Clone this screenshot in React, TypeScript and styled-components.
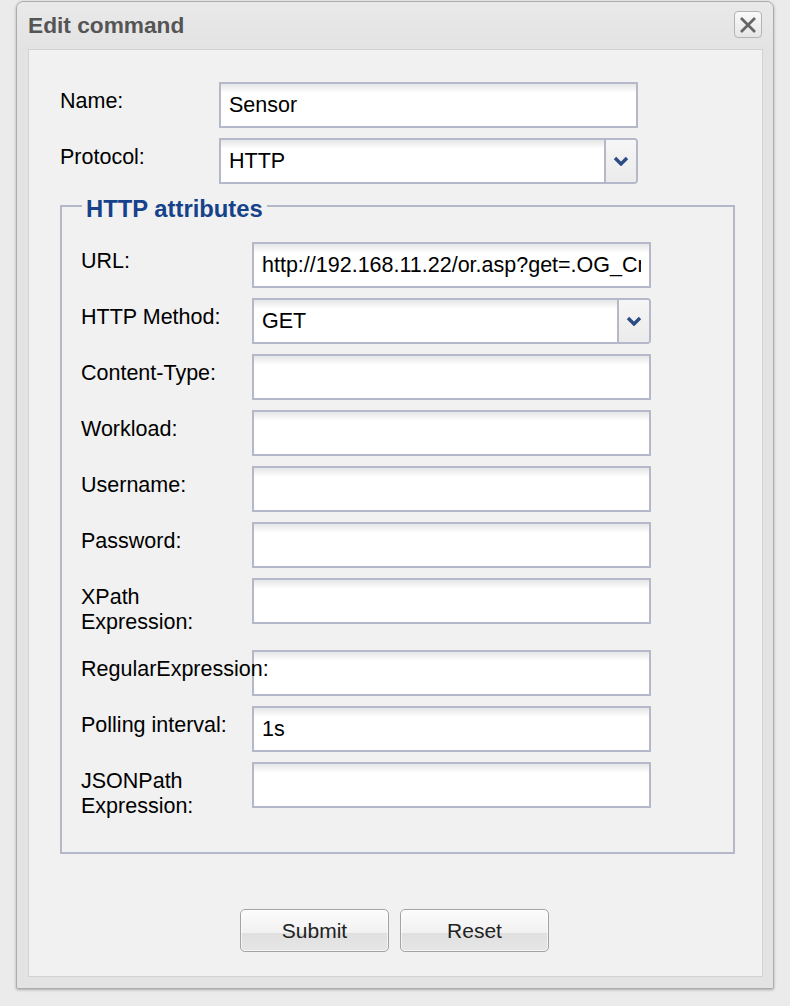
import React from "react";
import styled, { createGlobalStyle } from "styled-components";

const GlobalStyle = createGlobalStyle`
  html, body {
    margin: 0;
    padding: 0;
    background: #ebebeb;
  }
  body {
    font-family: "Liberation Sans", Arial, sans-serif;
  }
  * { box-sizing: border-box; }
`;

const Page = styled.div`
  width: 790px;
  height: 1006px;
  padding-top: 1px;
  background: #ebebeb;
  overflow: hidden;
`;

const Dialog = styled.div`
  margin-left: 16px;
  width: 758px;
  background: linear-gradient(to bottom, #e9e9e9 0px, #e3e3e3 48px, #e3e3e3 100%);
  border: 1px solid #acacac;
  border-radius: 7px 7px 2px 2px;
  box-shadow: 0 1px 3px rgba(0, 0, 0, 0.28);
  padding: 0 10px 11px 11px;
`;

const Header = styled.div`
  height: 47px;
  display: flex;
  justify-content: space-between;
  align-items: flex-start;
  padding-top: 8px;
`;

const Title = styled.div`
  margin-top: 2px;
  font-family: "Liberation Sans", Arial, sans-serif;
  font-weight: bold;
  font-size: 22.7px;
  line-height: 26px;
  color: #555555;
`;

const CloseButton = styled.div`
  width: 28px;
  height: 27px;
  margin-top: 1px;
  margin-right: 1px;
  border: 1px solid #b3b3b3;
  border-radius: 4px;
  background: linear-gradient(to bottom, #fafafa, #e6e6e6);
  display: flex;
  align-items: center;
  justify-content: center;
`;

const Panel = styled.div`
  background: #f1f1f1;
  border: 1px solid #d2d2d2;
  padding: 32px 27px 24px 31px;
`;

const TopGrid = styled.div`
  display: grid;
  grid-template-columns: 159px 419px;
  row-gap: 10px;
`;

const FieldGrid = styled.div`
  display: grid;
  grid-template-columns: 171px 399px;
  row-gap: 10px;
`;

const Label = styled.div`
  position: relative;
  z-index: 1;
  padding: 7px 0 5px 0;
  font-size: 21.5px;
  line-height: 25px;
  color: #000;
  white-space: pre-line;
`;

const TextInput = styled.input`
  display: block;
  width: 100%;
  height: 46px;
  margin: 0;
  border: 2px solid #b5b8c8;
  background: linear-gradient(to bottom, #e6e6e6 0px, #ffffff 9px, #ffffff 100%);
  padding: 0 8px;
  font-family: "Liberation Sans", Arial, sans-serif;
  font-size: 21.5px;
  color: #000;
  outline: none;
`;

const Select = styled.div`
  display: flex;
  height: 46px;
  border: 2px solid #b5b8c8;
  border-radius: 0 4px 4px 0;
  background: #fff;
  overflow: hidden;
`;

const SelectValue = styled.div`
  flex: 1;
  display: flex;
  align-items: center;
  padding: 0 8px;
  font-size: 21.5px;
  color: #000;
  background: linear-gradient(to bottom, #e6e6e6 0px, #ffffff 9px, #ffffff 100%);
`;

const SelectTrigger = styled.div`
  width: 32px;
  border-left: 2px solid #b5b8c8;
  background: linear-gradient(to bottom, #f6f6f6, #ebebeb);
  display: flex;
  align-items: center;
  justify-content: center;
`;

const Fieldset = styled.fieldset`
  margin: 6px 0 0 0;
  min-inline-size: 0;
  border: 2px solid #b5b8c8;
  padding: 20px 0 28px 19px;
`;

const Legend = styled.legend`
  margin-left: 1px;
  padding: 6px 4px 0 4px;
  font-family: "Liberation Sans", Arial, sans-serif;
  font-weight: bold;
  font-size: 23.8px;
  line-height: 26px;
  color: #15428b;
`;

const ButtonBar = styled.div`
  margin-top: 55px;
  display: flex;
  justify-content: center;
  gap: 11px;
  padding-right: 6px;
`;

const Button = styled.div`
  width: 149px;
  height: 43px;
  border: 1px solid #a3a3a3;
  border-radius: 5px;
  box-shadow: inset 0 1px 0 #ffffff, inset 0 0 0 1px rgba(255, 255, 255, 0.6);
  background: linear-gradient(
    to bottom,
    #fcfcfc 0%,
    #f1f1f1 56%,
    #e0e0e0 57%,
    #e6e6e6 100%
  );
  display: flex;
  align-items: center;
  justify-content: center;
  font-family: "Liberation Sans", Arial, sans-serif;
  font-size: 21px;
  color: #222;
`;

const Chevron = () => (
  <svg width="16" height="10" viewBox="0 0 16 10">
    <path d="M2 2 L8 8 L14 2" fill="none" stroke="#2c4c84" strokeWidth="3.4" strokeLinejoin="miter" strokeLinecap="butt" />
  </svg>
);

const CloseX = () => (
  <svg width="18" height="16" viewBox="0 0 18 16">
    <path d="M2 1 L16 15 M16 1 L2 15" stroke="#666" strokeWidth="2.8" fill="none" />
  </svg>
);

type Field =
  | { label: string; kind: "text"; value?: string }
  | { label: string; kind: "select"; value: string };

const httpFields: Field[] = [
  { label: "URL:", kind: "text", value: "http://192.168.11.22/or.asp?get=.OG_Cmd_Sensor" },
  { label: "HTTP Method:", kind: "select", value: "GET" },
  { label: "Content-Type:", kind: "text" },
  { label: "Workload:", kind: "text" },
  { label: "Username:", kind: "text" },
  { label: "Password:", kind: "text" },
  { label: "XPath\nExpression:", kind: "text" },
  { label: "RegularExpression:", kind: "text" },
  { label: "Polling interval:", kind: "text", value: "1s" },
  { label: "JSONPath\nExpression:", kind: "text" },
];

const renderControl = (f: Field) =>
  f.kind === "select" ? (
    <Select>
      <SelectValue>{f.value}</SelectValue>
      <SelectTrigger>
        <Chevron />
      </SelectTrigger>
    </Select>
  ) : (
    <TextInput defaultValue={f.value ?? ""} readOnly />
  );

export default function App() {
  return (
    <Page>
      <GlobalStyle />
      <Dialog>
        <Header>
          <Title>Edit command</Title>
          <CloseButton>
            <CloseX />
          </CloseButton>
        </Header>
        <Panel>
          <TopGrid>
            <Label>Name:</Label>
            <TextInput defaultValue="Sensor" readOnly />
            <Label>Protocol:</Label>
            {renderControl({ label: "Protocol:", kind: "select", value: "HTTP" })}
          </TopGrid>
          <Fieldset>
            <Legend>HTTP attributes</Legend>
            <FieldGrid>
              {httpFields.map((f) => (
                <React.Fragment key={f.label}>
                  <Label>{f.label}</Label>
                  {renderControl(f)}
                </React.Fragment>
              ))}
            </FieldGrid>
          </Fieldset>
          <ButtonBar>
            <Button>Submit</Button>
            <Button>Reset</Button>
          </ButtonBar>
        </Panel>
      </Dialog>
    </Page>
  );
}
